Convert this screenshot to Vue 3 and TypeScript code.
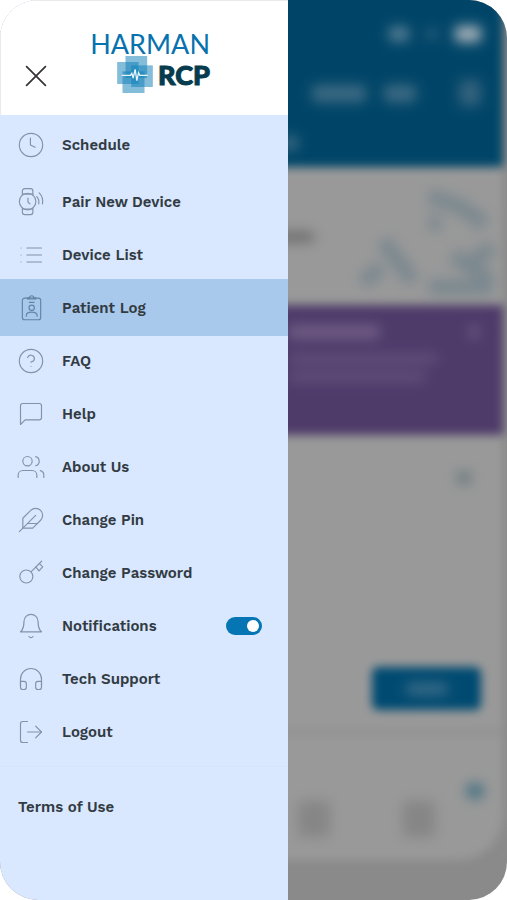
<script setup lang="ts">
import { ref } from 'vue'

interface MenuItem {
  label: string
  paths: string[]
  spaced?: boolean
  toggle?: boolean
}

const active = ref('Patient Log')
const notifications = ref(true)

const items: MenuItem[] = [
  { label: 'Schedule', paths: ['M2 12a10 10 0 1 0 20 0a10 10 0 1 0-20 0', 'M11.500 6v6l4 2'] },
  {
    label: 'Pair New Device',
    spaced: true,
    paths: [
      'M2 11.6a7.1 7.1 0 1 0 14.2 0a7.1 7.1 0 1 0-14.2 0',
      'M9.4 8.6v3.4l1.7 1.6',
      'M4.6 6V2.6a2 2 0 0 1 2-2h5a2 2 0 0 1 2 2V6',
      'M5 5.2h8.4M5 18h8.4',
      'M4.6 17.2v3.6a2 2 0 0 0 2 2h5a2 2 0 0 0 2-2v-3.6',
      'M17 7.3c1.6 1.8 2 4.2 1.6 6.3',
      'M19 4.2c2.6 2.6 3.4 6.2 2.8 9.4',
    ],
  },
  { label: 'Device List', paths: ['M8.500 6h12.500M8.500 12h12.500M8.500 18h12.500', 'M3.500 6h.01M3.500 12h.01M3.500 18h.01'] },
  {
    label: 'Patient Log',
    paths: [
      'M6.6 3.6h11.7a2 2 0 0 1 2 2v14.5a2 2 0 0 1-2 2H6.6a2 2 0 0 1-2-2V5.6a2 2 0 0 1 2-2z',
      'M9 4.3V3.3h1.8a1.8 1.8 0 0 1 3.6 0h1.8v1z',
      'M10.6 7.2h4',
      'M10.3 11.8a2.3 2.3 0 1 0 4.6 0a2.3 2.3 0 1 0-4.6 0',
      'M8 19v-.8c0-3.600 9.200-3.600 9.200 0v.8',
    ],
  },
  {
    label: 'FAQ',
    paths: ['M2 12a10 10 0 1 0 20 0a10 10 0 1 0-20 0', 'M9.09 9a3 3 0 0 1 5.83 1c0 2-3 3-3 3', 'M12 16.5h.01'],
  },
  { label: 'Help', paths: ['M21 15a2 2 0 0 1-2 2H7l-4 4V5a2 2 0 0 1 2-2h14a2 2 0 0 1 2 2z'] },
  {
    label: 'About Us',
    paths: [
      'M17 21v-2a4 4 0 0 0-4-4H5a4 4 0 0 0-4 4v2',
      'M5 7a4 4 0 1 0 8 0a4 4 0 1 0-8 0',
      'M23 21v-2a4 4 0 0 0-3-3.87',
      'M16 3.13a4 4 0 0 1 0 7.75',
    ],
  },
  {
    label: 'Change Pin',
    paths: ['M20.24 12.24a6 6 0 0 0-8.49-8.49L5 10.5V19h8.5z', 'M16 8L2 22', 'M17.5 15H9'],
  },
  {
    label: 'Change Password',
    paths: [
      'M2.4 15a5.6 5.6 0 1 0 11.2 0a5.6 5.6 0 1 0-11.2 0',
      'M12.2 10.8L21.1 1.9',
      'M16.2 6.9l2.7 3.2 3.1-3.4-2.7-2.7',
    ],
  },
  {
    label: 'Notifications',
    toggle: true,
    paths: ['M18 8A6 6 0 0 0 6 8c0 7-3 9-3 9h18s-3-2-3-9', 'M13.73 21a2 2 0 0 1-3.46 0'],
  },
  {
    label: 'Tech Support',
    paths: [
      'M3 18v-6a9 9 0 0 1 18 0v6',
      'M21 19a2 2 0 0 1-2 2h-1a2 2 0 0 1-2-2v-3a2 2 0 0 1 2-2h3zM3 19a2 2 0 0 0 2 2h1a2 2 0 0 0 2-2v-3a2 2 0 0 0-2-2H3z',
    ],
  },
  { label: 'Logout', paths: ['M9 21H5a2 2 0 0 1-2-2V5a2 2 0 0 1 2-2h4', 'M16 17l5-5-5-5', 'M21 12H9'] },
]
</script>

<template>
  <div class="screen">
    <aside class="drawer">
      <header class="brand">
        <button class="close" type="button" aria-label="Close menu">
          <svg viewBox="0 0 20 20"><path d="M1 1L19 19M19 1L1 19" /></svg>
        </button>
        <div class="logo">
          <span class="harman">HARMAN</span>
          <div class="product">
            <svg class="cross" viewBox="0 0 107 111" aria-hidden="true">
              <g fill="#1180b8" fill-opacity="0.52">
                <rect x="25" y="0" width="65" height="66" />
                <rect x="0" y="18" width="64" height="66" />
                <rect x="42" y="28" width="65" height="65" />
                <rect x="16" y="46" width="66" height="65" />
              </g>
              <path class="pulse" d="M14 58H40L44 52L48 66L54 40L59 74L64 50L68 58H92" />
            </svg>
            <span class="rcp">RCP</span>
          </div>
        </div>
      </header>

      <nav class="menu">
        <template v-for="item in items" :key="item.label">
          <label v-if="item.toggle" class="row">
            <svg class="icon" viewBox="0 0 24 24" aria-hidden="true">
              <path v-for="d in item.paths" :key="d" :d="d" />
            </svg>
            <span class="text">{{ item.label }}</span>
            <input v-model="notifications" class="switch" type="checkbox" />
          </label>
          <a
            v-else
            class="row"
            :class="{ spaced: item.spaced, active: item.label === active }"
            href="#"
            @click.prevent="active = item.label"
          >
            <svg class="icon" viewBox="0 0 24 24" aria-hidden="true">
              <path v-for="d in item.paths" :key="d" :d="d" />
            </svg>
            <span class="text">{{ item.label }}</span>
          </a>
        </template>
      </nav>

      <footer class="footer"><a href="#">Terms of Use</a></footer>
    </aside>

    <div class="behind" aria-hidden="true">
      <div class="page">
        <div class="top">
          <div class="status"><i class="signal"></i><i class="wifi"></i><i class="battery"></i></div>
          <div class="title"><i class="word"></i><i class="word short"></i><i class="bell"></i></div>
          <i class="tab"></i>
        </div>
        <div class="banner">
          <i class="caption"></i>
          <svg class="art" viewBox="0 0 150 130">
            <path d="M76 25l30 10 26 18M30 70l30 40M76 52h12M10 112l18-16M100 84l38 26M76 116h64M112 96l28-20" />
          </svg>
        </div>
        <div class="notice">
          <div class="notice-head"><i class="headline"></i><i class="dismiss"></i></div>
          <i class="line"></i>
          <i class="line second"></i>
        </div>
        <div class="content">
          <i class="chevron"></i>
          <div class="action"><i></i></div>
        </div>
        <div class="tabs"><i></i><i></i><b></b></div>
      </div>
    </div>
  </div>
</template>

<style>
body {
  margin: 0;
  background: #fff;
}
</style>

<style scoped>
* {
  box-sizing: border-box;
}
.screen {
  display: flex;
  min-height: 100vh;
  border-radius: 38px;
  overflow: hidden;
  font-family: 'Work Sans', Inter, sans-serif;
  background: #8a8a8a;
}
.drawer {
  width: 56%;
  min-width: 288px;
  flex: none;
  display: flex;
  flex-direction: column;
  background: #d9e7ff;
}
.brand {
  display: flex;
  justify-content: space-between;
  height: 115px;
  padding: 31px 78px 0 25px;
  background: #fff;
  box-shadow: inset 1px 1px 1px #e9e9e9;
}
.close {
  align-self: flex-start;
  width: 22px;
  height: 22px;
  margin-top: 34px;
  padding: 0;
  border: 0;
  background: none;
}
.close svg {
  display: block;
  width: 22px;
  height: 22px;
  fill: none;
  stroke: #37343a;
  stroke-width: 1.6;
}
.logo {
  display: flex;
  flex-direction: column;
  align-items: flex-end;
}
.harman {
  font: 400 27px/25px Lato, sans-serif;
  color: #0872ae;
}
.product {
  display: flex;
  align-items: center;
  gap: 5px;
}
.cross {
  width: 36px;
  height: 37px;
}
.pulse {
  fill: none;
  stroke: #e4f6ff;
  stroke-width: 4;
}
.rcp {
  font: 900 27px/37px Lato, sans-serif;
  color: #063c4d;
  -webkit-text-stroke: 1px #063c4d;
}
.menu {
  display: flex;
  flex-direction: column;
  padding: 3px 0 8px;
}
.row {
  display: flex;
  align-items: center;
  gap: 17px;
  height: 53px;
  padding: 0 26px 0 17px;
  color: #323b42;
  text-decoration: none;
}
.row.spaced {
  margin-top: 4px;
}
.row.active {
  height: 57px;
  margin: -2px 0;
  background: #a8c8ec;
}
.icon {
  width: 28px;
  height: 28px;
  flex: none;
  overflow: visible;
  fill: none;
  stroke: #8492a9;
  stroke-width: 1;
  stroke-linecap: round;
  stroke-linejoin: round;
}
.active .icon {
  stroke: #6683a2;
}
.text,
.footer a {
  font-size: 15px;
  font-weight: 600;
  line-height: 20px;
  white-space: nowrap;
}
.switch {
  appearance: none;
  width: 36px;
  height: 18px;
  margin: 0 0 0 auto;
  padding: 3px;
  border-radius: 9px;
  background: #8fa4bd;
}
.switch::before {
  content: '';
  display: block;
  width: 12px;
  height: 12px;
  border-radius: 50%;
  background: #fff;
}
.switch:checked {
  background: #0576b3;
}
.switch:checked::before {
  margin-left: auto;
}
.footer {
  padding: 30px 18px;
  border-top: 1px solid #d6e4fd;
}
.footer a {
  color: #323b42;
  text-decoration: none;
}
.behind {
  flex: 1;
  display: flex;
  overflow: hidden;
}
.page {
  flex: 1;
  display: flex;
  flex-direction: column;
  margin: -20px 4px 40px -30px;
  border-radius: 0 0 45px 0;
  overflow: hidden;
  background: #999;
  filter: blur(5px);
}
.page i,
.page b {
  display: block;
  border-radius: 4px;
  filter: blur(4px);
}
.top {
  height: 187px;
  padding: 46px 22px 0 54px;
  background: #004568;
}
.status {
  display: flex;
  align-items: center;
  justify-content: flex-end;
  gap: 16px;
}
.signal {
  width: 20px;
  height: 14px;
  background: #5a8196;
}
.wifi {
  width: 14px;
  height: 10px;
  background: #285d7a;
}
.battery {
  width: 26px;
  height: 16px;
  background: #a9b3ba;
}
.title {
  display: flex;
  align-items: center;
  gap: 18px;
  margin-top: 38px;
}
.word {
  width: 54px;
  height: 17px;
  background: #3e6b84;
}
.word.short {
  width: 32px;
}
.bell {
  width: 22px;
  height: 26px;
  margin-left: auto;
  background: #33627d;
}
.tab {
  width: 16px;
  height: 14px;
  margin: 30px 0 0 -30px;
  background: #3d6a82;
}
.banner {
  display: flex;
  justify-content: space-between;
  height: 138px;
  background: #999;
}
.caption {
  width: 56px;
  height: 10px;
  margin-top: 65px;
  background: #6a6a6a;
}
.art {
  width: 150px;
  height: 138px;
  fill: none;
  stroke: #7a888f;
  stroke-width: 15;
  filter: blur(4px);
}
.notice {
  height: 130px;
  padding: 20px 24px 0 30px;
  background: #4f3b6a;
}
.notice-head {
  display: flex;
  justify-content: space-between;
  align-items: center;
}
.headline {
  width: 92px;
  height: 14px;
  background: #705d85;
}
.dismiss {
  width: 10px;
  height: 14px;
  background: #6c5883;
}
.line {
  width: 150px;
  height: 12px;
  margin-top: 14px;
  background: #604d78;
}
.line.second {
  width: 138px;
  margin-top: 6px;
}
.content {
  flex: 1;
  display: flex;
  flex-direction: column;
  align-items: flex-end;
  justify-content: space-between;
  padding: 36px 22px 20px 0;
  border-bottom: 4px solid #8d8d8d;
}
.chevron {
  width: 14px;
  height: 14px;
  margin-right: 10px;
  background: #6f7d81;
}
.action {
  display: flex;
  align-items: center;
  justify-content: center;
  width: 109px;
  height: 43px;
  border-radius: 6px;
  background: #004a71;
}
.action i {
  width: 42px;
  height: 12px;
  background: #3a6c88;
}
.tabs {
  display: flex;
  justify-content: space-between;
  align-items: center;
  height: 126px;
  padding: 44px 20px 0 40px;
}
.tabs i {
  width: 32px;
  height: 36px;
  background: #868686;
}
.tabs b {
  width: 16px;
  height: 14px;
  margin: -56px 0 0 -40px;
  background: #3f6f82;
}
</style>
